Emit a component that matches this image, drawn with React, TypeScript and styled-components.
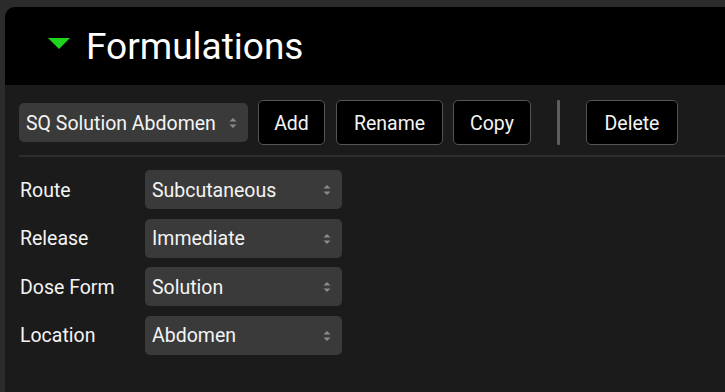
import React from "react";
import styled, { createGlobalStyle } from "styled-components";

const Global = createGlobalStyle`
  html, body { margin: 0; padding: 0; background: #2b2b2b; }
  body { font-family: Roboto, "Noto Sans", sans-serif; color: #f4f4f4; }
  #root { height: 392px; overflow: hidden; }
`;

const Page = styled.div`
  height: 392px;
  padding: 7px 0 0 5px;
  box-sizing: border-box;
  display: flex;
`;

const Panel = styled.section`
  flex: 1;
  border-top-left-radius: 10px;
  overflow: hidden;
  background: #1b1b1b;
  display: flex;
  flex-direction: column;
`;

const Header = styled.header`
  height: 78px;
  background: #000;
  display: flex;
  align-items: center;
  padding-left: 43px;
  gap: 16px;
`;

const Caret = styled.svg`
  width: 22px;
  height: 12px;
  margin-top: -4px;
`;

const Title = styled.h1`
  margin: 0;
  font-weight: 400;
  font-size: 37px;
  color: #fff;
`;

const Body = styled.div`
  padding: 15px 0 0 14px;
  display: flex;
  flex-direction: column;
`;

const Toolbar = styled.div`
  display: flex;
  align-items: center;
  height: 45px;
  padding-bottom: 10px;
  border-bottom: 2px solid #2e2e2e;
`;

const SelectBox = styled.div<{ $w: number }>`
  width: ${(p) => p.$w}px;
  height: 39px;
  box-sizing: border-box;
  background: #3a3a3a;
  border-radius: 5px;
  display: flex;
  align-items: center;
  justify-content: space-between;
  padding: 1px 10px 0 7px;
  font-size: 19.5px;
  color: #f4f4f4;
`;

const Button = styled.button<{ $w: number; $ml: number }>`
  width: ${(p) => p.$w}px;
  margin-left: ${(p) => p.$ml}px;
  height: 45px;
  background: #000;
  border: 1.5px solid #555;
  border-radius: 5px;
  color: #f4f4f4;
  font-family: Roboto, "Noto Sans", sans-serif;
  font-size: 19.5px;
  padding: 1px 0 0;
`;

const Divider = styled.div`
  width: 3px;
  height: 45px;
  background: #5e5e5e;
  margin-left: 26px;
  border-radius: 1px;
`;

const Form = styled.div`
  display: grid;
  grid-template-columns: 125px 197px;
  row-gap: 9.67px;
  padding: 13px 0 0 1px;
  align-items: center;
`;

const Label = styled.span`
  font-size: 19.5px;
  color: #f4f4f4;
  padding-top: 1px;
`;

const Spinner = () => (
  <svg width="10" height="14" viewBox="0 0 10 14">
    <path d="M1.5 5.5 L5 2 L8.5 5.5 Z" fill="#8a8a8a" />
    <path d="M1.5 8.5 L5 12 L8.5 8.5 Z" fill="#8a8a8a" />
  </svg>
);

const Select = ({ value, w }: { value: string; w: number }) => (
  <SelectBox $w={w}>
    <span>{value}</span>
    <Spinner />
  </SelectBox>
);

const fields = [
  ["Route", "Subcutaneous"],
  ["Release", "Immediate"],
  ["Dose Form", "Solution"],
  ["Location", "Abdomen"],
];

export default function App() {
  return (
    <>
      <Global />
      <Page>
        <Panel>
          <Header>
            <Caret viewBox="0 0 22 12">
              <path d="M0 0 H22 L11 11 Z" fill="#1ed41e" />
            </Caret>
            <Title>Formulations</Title>
          </Header>
          <Body>
            <Toolbar>
              <Select value="SQ Solution Abdomen" w={229} />
              <Button $w={67} $ml={10}>Add</Button>
              <Button $w={107} $ml={11}>Rename</Button>
              <Button $w={78} $ml={10}>Copy</Button>
              <Divider />
              <Button $w={92} $ml={26}>Delete</Button>
            </Toolbar>
            <Form>
              {fields.map(([l, v]) => (
                <React.Fragment key={l}>
                  <Label>{l}</Label>
                  <Select value={v} w={197} />
                </React.Fragment>
              ))}
            </Form>
          </Body>
        </Panel>
      </Page>
    </>
  );
}
